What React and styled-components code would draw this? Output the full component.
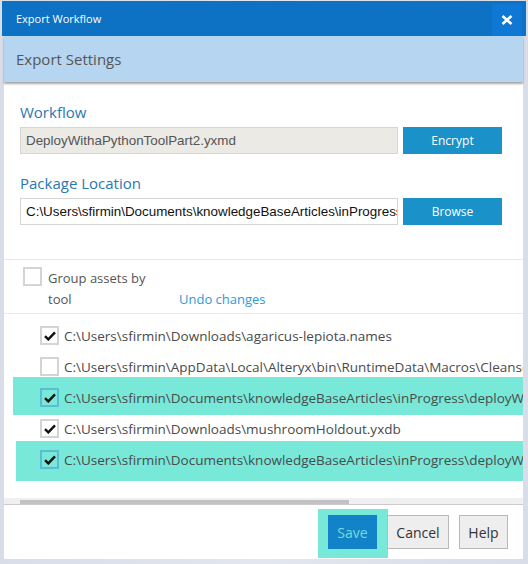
import React from "react";
import styled, { createGlobalStyle } from "styled-components";

const GlobalStyle = createGlobalStyle`
  html, body {
    margin: 0;
    padding: 0;
    background: #dfe2eb;
  }
  body {
    font-family: "Open Sans", "Noto Sans", sans-serif;
  }
  * { box-sizing: border-box; }
`;

const Frame = styled.div`
  width: 528px;
  height: 564px;
  display: flex;
  flex-direction: column;
  padding: 1px 0 5px;
  background: linear-gradient(90deg, #d9dde8, #e3e6ee 50%, #d9dde8);
  overflow: hidden;
`;

const TitleBar = styled.div`
  flex: none;
  margin: 0 2px;
  height: 35px;
  background: #0d71c4;
  display: flex;
  align-items: center;
  justify-content: space-between;
  padding-left: 14px;
  padding-right: 4px;
  color: #fff;
  font-size: 11px;
`;

const CloseButton = styled.div`
  width: 30px;
  height: 32px;
  margin-top: 2px;
  background: #0e78d4;
  display: flex;
  align-items: center;
  justify-content: center;
`;

const Window = styled.div`
  flex: 1;
  margin: 0 5px 0 4px;
  background: #fff;
  display: flex;
  flex-direction: column;
  min-height: 0;
`;

const Header = styled.div`
  flex: none;
  height: 46px;
  background: #b6d5f1;
  box-shadow: 0 2px 2px rgba(0, 0, 0, 0.35);
  display: flex;
  align-items: center;
  padding-left: 12px;
  font-size: 15px;
  color: #555;
  position: relative;
  z-index: 1;
`;

const Settings = styled.div`
  flex: none;
  padding: 20px 21px 34px 16px;
  border-bottom: 1px solid #e9e9e9;
  display: flex;
  flex-direction: column;
`;

const FieldLabel = styled.div`
  font-size: 15px;
  line-height: 20px;
  color: #2a78b2;
  margin-top: ${(p) => (p.$first ? "0" : "19px")};
  margin-bottom: 5px;
`;

const FieldRow = styled.div`
  display: flex;
  gap: 5px;
  height: 27px;
`;

const PathInput = styled.div`
  flex: none;
  width: 378px;
  border: 1px solid #d6d6d6;
  background: ${(p) => (p.$readOnly ? "#ebeae5" : "#fff")};
  color: ${(p) => (p.$readOnly ? "#555" : "#111")};
  font-family: "Liberation Sans", Arial, sans-serif;
  font-size: 13.4px;
  line-height: 25px;
  padding-left: 5px;
  white-space: nowrap;
  overflow: hidden;
`;

const BlueButton = styled.div`
  flex: none;
  width: 99px;
  background: #1a91c9;
  color: #fff;
  font-size: 12px;
  display: flex;
  align-items: center;
  justify-content: center;
`;

const GroupSection = styled.div`
  flex: none;
  display: flex;
  align-items: flex-end;
  padding: 7px 0 3px 19px;
  border-bottom: 1px solid #e9e9e9;
`;

const GroupToggle = styled.div`
  display: flex;
  align-items: flex-start;
  gap: 6px;
  width: 156px;
`;

const GroupText = styled.div`
  font-size: 13px;
  line-height: 21px;
  color: #555;
  width: 104px;
  padding-top: 1px;
`;

const UndoLink = styled.div`
  font-size: 13px;
  line-height: 21px;
  color: #2e9ad6;
`;

const FileList = styled.div`
  flex: 1 1 0;
  min-height: 0;
  overflow: hidden;
  padding-top: 6px;
  display: flex;
  flex-direction: column;
`;

const FileRow = styled.div`
  flex: none;
  position: relative;
  height: 31px;
  display: flex;
  align-items: center;
  gap: 5px;
  padding-left: 36px;
  white-space: nowrap;
  font-size: 13.5px;
  color: #4a4a4a;

  &::before {
    content: "";
    display: ${(p) => (p.$marked ? "block" : "none")};
    position: absolute;
    left: ${(p) => p.$markLeft}px;
    right: -10px;
    top: ${(p) => p.$markTop}px;
    bottom: ${(p) => p.$markBottom}px;
    background: #78e8d8;
  }

  & > * {
    position: relative;
  }
`;

const Box = styled.div`
  flex: none;
  width: 19px;
  height: 19px;
  border: 2px solid ${(p) => (p.$marked ? "#5cbcd6" : "#d4d4d4")};
  background: ${(p) => (p.$marked ? "transparent" : "#fff")};
  display: flex;
  align-items: center;
  justify-content: center;
`;

const ScrollTrack = styled.div`
  flex: none;
  height: 7px;
  background: #f0f0f0;
  border-bottom: 1px solid #cbcbcb;
  padding: 2px 0 0 16px;
`;

const ScrollThumb = styled.div`
  width: 329px;
  height: 4px;
  background: #c2c2c2;
`;

const Footer = styled.div`
  flex: none;
  display: flex;
  justify-content: flex-end;
  gap: 10px;
  padding: 10px 15px 10px 0;
`;

const SaveWrap = styled.div`
  position: relative;
  display: flex;

  &::before {
    content: "";
    position: absolute;
    left: -10px;
    right: -11px;
    top: -6px;
    bottom: -9px;
    background: #78e8d8;
  }
`;

const FooterButton = styled.div`
  position: relative;
  height: 34px;
  width: ${(p) => p.$w}px;
  display: flex;
  align-items: center;
  justify-content: center;
  font-size: 14px;
  background: ${(p) => (p.$primary ? "#1283c8" : "#eeeeee")};
  color: ${(p) => (p.$primary ? "#74dcd6" : "#333")};
  border: ${(p) => (p.$primary ? "none" : "1px solid #b9b9b9")};
`;

const Check = () => (
  <svg width="12" height="10" viewBox="0 0 12 10">
    <path d="M1 5.2 L4.3 8.4 L11 1.4" fill="none" stroke="#111" strokeWidth="2.4" />
  </svg>
);

const CloseIcon = () => (
  <svg width="12" height="10" viewBox="0 0 12 10">
    <path d="M1.5 1 L10.5 9 M10.5 1 L1.5 9" stroke="#fff" strokeWidth="2.6" />
  </svg>
);

const files = [
  { path: "C:\\Users\\sfirmin\\Downloads\\agaricus-lepiota.names", checked: true },
  { path: "C:\\Users\\sfirmin\\AppData\\Local\\Alteryx\\bin\\RuntimeData\\Macros\\Cleanse.yxmc", checked: false },
  {
    path: "C:\\Users\\sfirmin\\Documents\\knowledgeBaseArticles\\inProgress\\deployWithaPythonTool\\model.pkl",
    checked: true,
    mark: { left: 9, top: -5, bottom: -2 },
  },
  { path: "C:\\Users\\sfirmin\\Downloads\\mushroomHoldout.yxdb", checked: true },
  {
    path: "C:\\Users\\sfirmin\\Documents\\knowledgeBaseArticles\\inProgress\\deployWithaPythonTool\\score.py",
    checked: true,
    mark: { left: 12, top: -3, bottom: -6 },
  },
];

export default function App() {
  return (
    <>
      <GlobalStyle />
      <Frame>
        <TitleBar>
          <span>Export Workflow</span>
          <CloseButton>
            <CloseIcon />
          </CloseButton>
        </TitleBar>
        <Window>
          <Header>Export Settings</Header>
          <Settings>
            <FieldLabel $first>Workflow</FieldLabel>
            <FieldRow>
              <PathInput $readOnly>DeployWithaPythonToolPart2.yxmd</PathInput>
              <BlueButton>Encrypt</BlueButton>
            </FieldRow>
            <FieldLabel>Package Location</FieldLabel>
            <FieldRow>
              <PathInput>C:\Users\sfirmin\Documents\knowledgeBaseArticles\inProgress</PathInput>
              <BlueButton>Browse</BlueButton>
            </FieldRow>
          </Settings>
          <GroupSection>
            <GroupToggle>
              <Box />
              <GroupText>Group assets by tool</GroupText>
            </GroupToggle>
            <UndoLink>Undo changes</UndoLink>
          </GroupSection>
          <FileList>
            {files.map((f) => (
              <FileRow
                key={f.path}
                $marked={!!f.mark}
                $markLeft={f.mark ? f.mark.left : 0}
                $markTop={f.mark ? f.mark.top : 0}
                $markBottom={f.mark ? f.mark.bottom : 0}
              >
                <Box $marked={!!f.mark}>{f.checked && <Check />}</Box>
                <span>{f.path}</span>
              </FileRow>
            ))}
          </FileList>
          <ScrollTrack>
            <ScrollThumb />
          </ScrollTrack>
          <Footer>
            <SaveWrap>
              <FooterButton $primary $w={49}>Save</FooterButton>
            </SaveWrap>
            <FooterButton $w={62}>Cancel</FooterButton>
            <FooterButton $w={49}>Help</FooterButton>
          </Footer>
        </Window>
      </Frame>
    </>
  );
}
